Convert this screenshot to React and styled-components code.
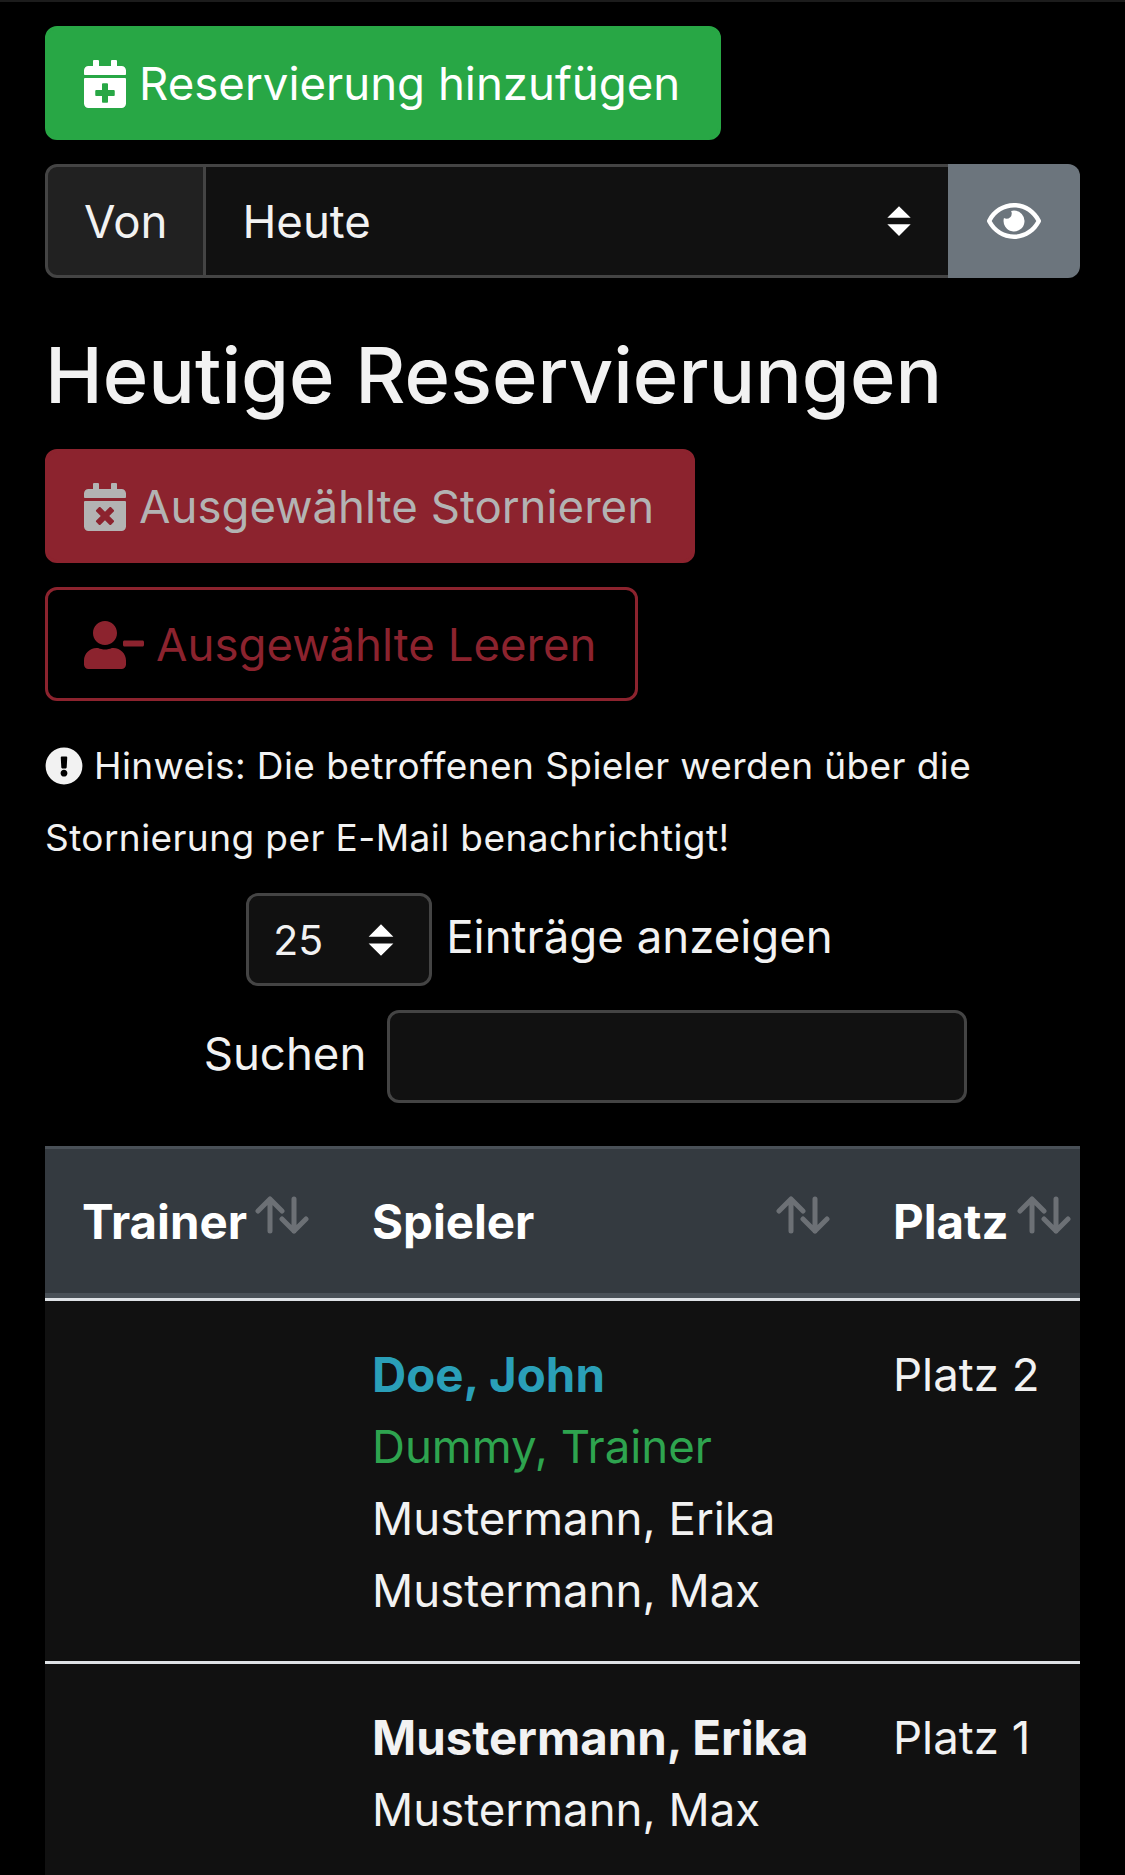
import React from 'react';
import styled, { createGlobalStyle } from 'styled-components';
import { FaCalendarPlus, FaCalendarTimes, FaUserMinus, FaRegEye, FaExclamationCircle } from 'react-icons/fa';

const caret = "url(\"data:image/svg+xml,%3csvg xmlns='http://www.w3.org/2000/svg' viewBox='0 0 16 16'%3e%3cpath fill='white' d='M8 1 L13.5 6.5 H2.5 Z M8 15 L2.5 9.5 H13.5 Z'/%3e%3c/svg%3e\")";

const GlobalStyle = createGlobalStyle`
  html, body {
    margin: 0;
    background: #000;
    color: #f2f2f2;
    font-family: Inter, "Liberation Sans", sans-serif;
    font-size: 45.6px;
    line-height: 72px;
  }
`;

const Page = styled.div`
  height: 1875px;
  overflow: hidden;
  padding: 24px 45px 0;
  border-top: 2px solid #1c1c1c;
  box-sizing: border-box;
`;

const Button = styled.button`
  display: flex;
  align-items: center;
  gap: ${props => props.$gap || 10}px;
  height: 114px;
  padding: 2px 38px 0 ${props => props.$left || 33}px;
  border-radius: 12px;
  border: 3px solid ${props => props.$border};
  background: ${props => props.$bg};
  color: ${props => props.$color};
  font: inherit;
  box-sizing: border-box;
  margin-bottom: 24px;
  svg { flex: none; }
`;

const InputGroup = styled.div`
  display: flex;
  height: 114px;
  margin-bottom: 50px;
`;

const GroupLabel = styled.div`
  display: flex;
  align-items: center;
  padding: 2px 36px 0;
  background: #212121;
  border: 3px solid #444;
  border-radius: 12px 0 0 12px;
`;

const Select = styled.select`
  appearance: none;
  box-sizing: border-box;
  font: inherit;
  color: #f2f2f2;
  background: #111 ${caret} no-repeat right 32px center / 34px 36px;
  border: 3px solid #444;
  border-left: 0;
  border-right: 0;
  flex: 1;
  padding: 2px 36px 0;
  outline: none;
`;

const EyeButton = styled.div`
  width: 132px;
  display: flex;
  align-items: center;
  justify-content: center;
  background: #6c757d;
  border-radius: 0 12px 12px 0;
  color: #fff;
`;

const Title = styled.h1`
  margin: 0 0 27px;
  font-size: 77.6px;
  font-weight: 500;
  line-height: 94px;
`;

const Note = styled.p`
  margin: 29px 0 19px;
  font-size: 37px;
  letter-spacing: 0.42px;
  svg { vertical-align: -6px; margin-right: 11px; }
`;

const LengthRow = styled.div`
  display: flex;
  justify-content: center;
  align-items: center;
  gap: 14px;
  margin-bottom: 24px;
  padding-right: 46px;
`;

const SmallSelect = styled(Select)`
  flex: none;
  width: 186px;
  height: 93px;
  padding: 0 24px;
  font-size: 41px;
  border: 3px solid #444;
  border-radius: 12px;
  background-position: right 30px center;
  background-size: 36px 36px;
`;

const SearchRow = styled.div`
  display: flex;
  justify-content: center;
  align-items: center;
  gap: 21px;
  margin: 0 0 43px;
  padding-left: 46px;
`;

const RowLabel = styled.span`
  padding-bottom: 6px;
`;

const SearchInput = styled.input`
  box-sizing: border-box;
  width: 580px;
  height: 93px;
  background: #111;
  border: 3px solid #444;
  border-radius: 12px;
  outline: none;
`;

const Table = styled.table`
  width: 1035px;
  border-collapse: collapse;
  table-layout: fixed;
`;

const HeadRow = styled.tr`
  background: #343a40;
  height: 153px;
  box-shadow: inset 0 3px 0 #495057, inset 0 -6px 0 #495057;
  border-bottom: 3px solid #dee2e6;
`;

const HeadCell = styled.th`
  box-sizing: border-box;
  text-align: left;
  padding: 0 0 0 37px;
  font-size: 47.4px;
  font-weight: 700;
  color: #fff;
  width: ${props => props.$width}px;
`;

const HeadInner = styled.div`
  display: flex;
  align-items: center;
  justify-content: ${props => props.$spread ? 'space-between' : 'flex-start'};
  padding-right: ${props => props.$spread ? 26 : 0}px;
  gap: 8px;
  svg { margin-top: -14px; flex: none; }
`;

const BodyRow = styled.tr`
  background: #111;
  border-bottom: 3px solid #dee2e6;
`;

const Cell = styled.td`
  vertical-align: top;
  padding: 38px 0 34px 37px;
  color: #f2f2f2;
`;

const Player = styled.div`
  color: ${props => props.$color || 'inherit'};
  font-weight: ${props => props.$bold ? 700 : 400};
  font-size: ${props => props.$bold ? '47.4px' : 'inherit'};
`;

const Sort = () => (
  <svg width="54" height="38" viewBox="0 0 54 38" fill="none" stroke="#6c7075" strokeWidth="5" strokeLinecap="round" strokeLinejoin="round">
    <path d="M15 3v32M3 15 15 3l12 12" />
    <path d="M39 3v32M27 23l12 12 12-12" />
  </svg>
);

const rows = [
  {
    court: 'Platz 2',
    players: [
      { name: 'Doe, John', bold: true, color: '#2a9fb8' },
      { name: 'Dummy, Trainer', color: '#2ea44f' },
      { name: 'Mustermann, Erika' },
      { name: 'Mustermann, Max' },
    ],
  },
  {
    court: 'Platz 1',
    players: [
      { name: 'Mustermann, Erika', bold: true },
      { name: 'Mustermann, Max' },
    ],
  },
];

export default function App() {
  return (
    <Page>
      <GlobalStyle />
      <Button $bg="#28a745" $border="#28a745" $color="#fff">
        <FaCalendarPlus size={48} /> Reservierung hinzufügen
      </Button>
      <InputGroup>
        <GroupLabel>Von</GroupLabel>
        <Select defaultValue="heute">
          <option value="heute">Heute</option>
        </Select>
        <EyeButton><FaRegEye size={54} /></EyeButton>
      </InputGroup>
      <Title>Heutige Reservierungen</Title>
      <Button $bg="#8c232e" $border="#8c232e" $color="#b3b3b3">
        <FaCalendarTimes size={48} /> Ausgewählte Stornieren
      </Button>
      <Button $bg="#000" $border="#8c232e" $color="#8c232e" $gap={12} $left={36}>
        <FaUserMinus size={60} /> Ausgewählte Leeren
      </Button>
      <Note>
        <FaExclamationCircle size={38} />Hinweis: Die betroffenen Spieler werden über die Stornierung per E-Mail benachrichtigt!
      </Note>
      <LengthRow>
        <SmallSelect defaultValue="25">
          <option value="25">25</option>
        </SmallSelect>
        <RowLabel>Einträge anzeigen</RowLabel>
      </LengthRow>
      <SearchRow>
        <RowLabel>Suchen</RowLabel>
        <SearchInput />
      </SearchRow>
      <Table>
        <thead>
          <HeadRow>
            <HeadCell $width={290}><HeadInner>Trainer<Sort /></HeadInner></HeadCell>
            <HeadCell $width={521}><HeadInner $spread>Spieler<Sort /></HeadInner></HeadCell>
            <HeadCell $width={224}><HeadInner>Platz<Sort /></HeadInner></HeadCell>
          </HeadRow>
        </thead>
        <tbody>
          {rows.map(row => (
            <BodyRow key={row.court}>
              <Cell />
              <Cell>
                {row.players.map(p => (
                  <Player key={p.name} $bold={p.bold} $color={p.color}>{p.name}</Player>
                ))}
              </Cell>
              <Cell>{row.court}</Cell>
            </BodyRow>
          ))}
        </tbody>
      </Table>
    </Page>
  );
}
